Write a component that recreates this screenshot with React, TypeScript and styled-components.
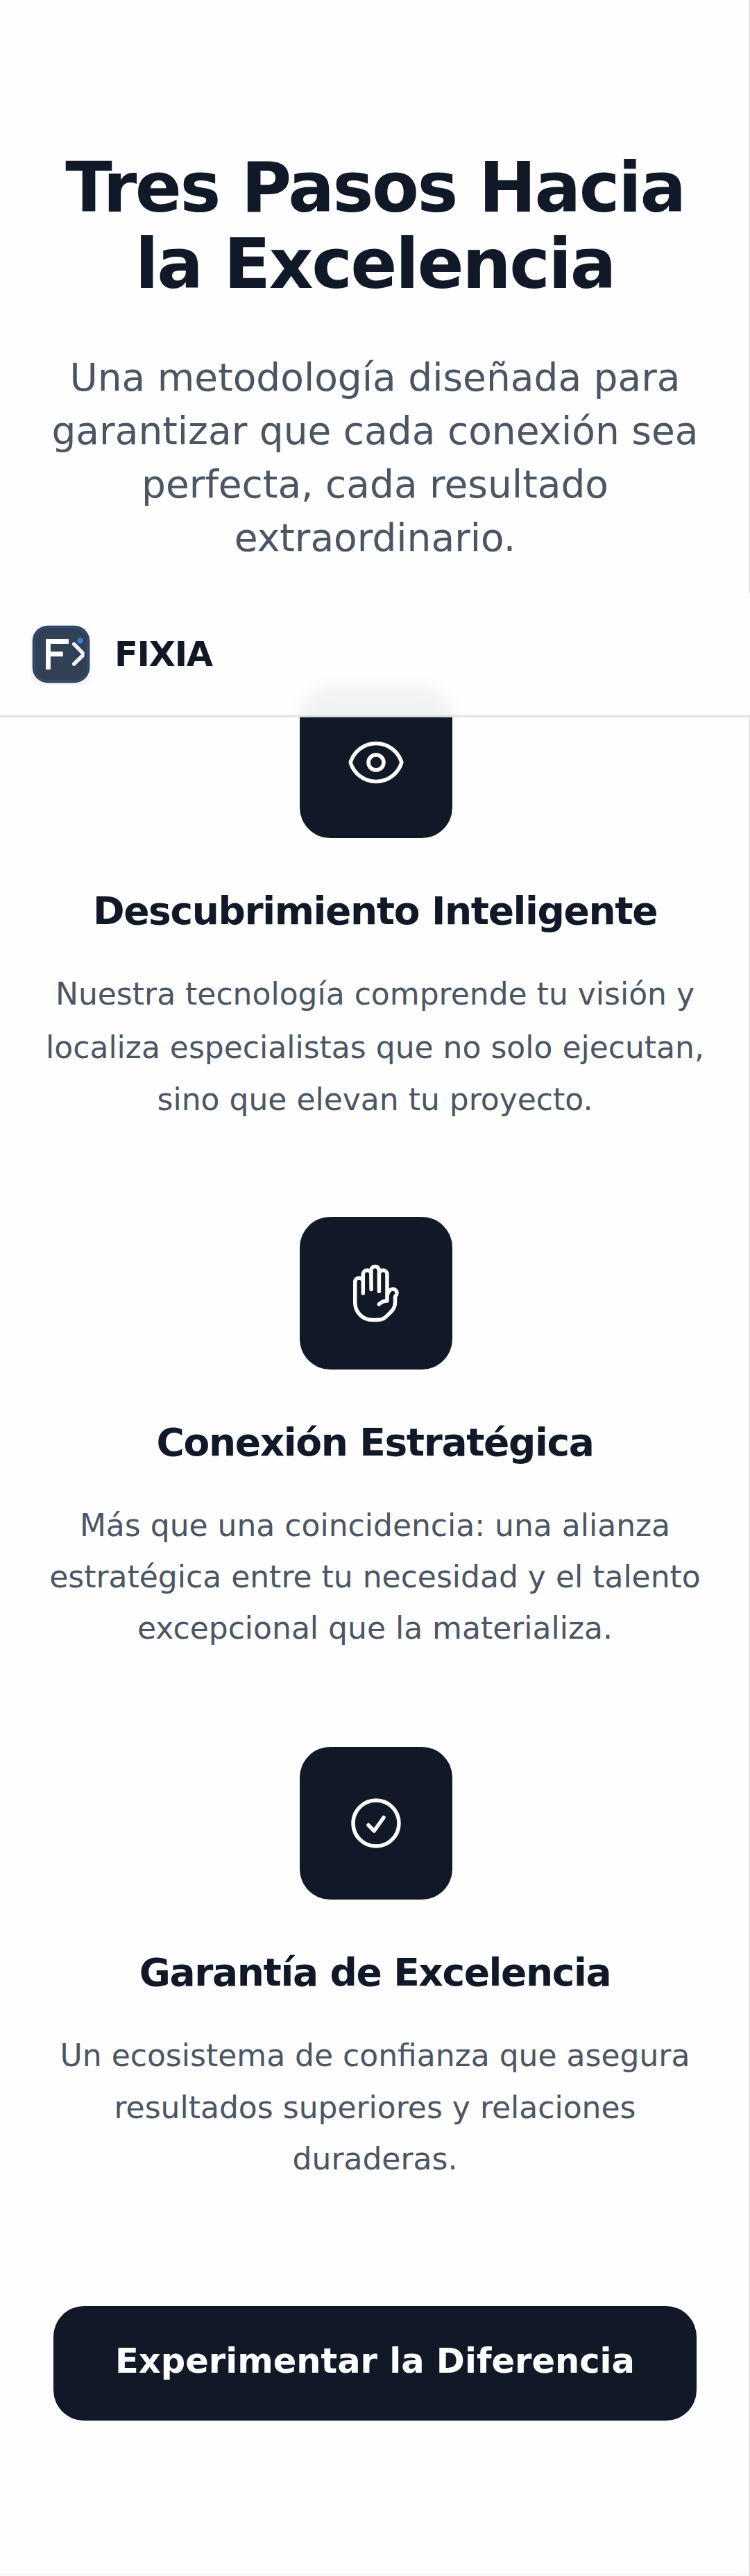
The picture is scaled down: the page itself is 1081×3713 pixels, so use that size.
import React from "react";
import styled, { createGlobalStyle } from "styled-components";
import { HiOutlineCheckCircle, HiOutlineEye, HiOutlineHandRaised } from "react-icons/hi2";
import type { IconType } from "react-icons";

const ink = "#111827";
const muted = "#4b5563";

const GlobalStyle = createGlobalStyle`
  *, *::before, *::after { box-sizing: border-box; }
  body {
    margin: 0;
    background: #fafafa;
    color: ${ink};
    font-family: "DejaVu Sans", sans-serif;
  }
  h2, h3, p { margin: 0; }
`;

const Page = styled.main`
  position: relative;
  width: 1081px;
  height: 3713px;
  overflow: hidden;
`;

const Content = styled.div`
  height: 100%;
  border-right: 1px solid #d5e4e0;
`;

const Section = styled.section`
  display: flex;
  flex-direction: column;
  align-items: center;
  height: 3709px;
  padding: 216px 0 0 1px;
  background: #fefefe;
  text-align: center;
`;

const Line = styled.span<{ $after?: number }>`
  display: block;
  margin-bottom: ${({ $after = 0 }) => $after}px;
  white-space: nowrap;
`;

const Heading = styled.h2`
  font-size: 99px;
  line-height: 110px;
  font-weight: 700;
  letter-spacing: -0.025em;
`;

const Lead = styled.p`
  margin-top: 70px;
  color: ${muted};
  font-size: 55px;
  line-height: 77px;
`;

const Steps = styled.div`
  display: flex;
  flex-direction: column;
  gap: 132px;
  margin-top: 175.25px;
`;

const Step = styled.article`
  display: flex;
  flex-direction: column;
  align-items: center;
  height: 632.5px;
`;

const Tile = styled.div`
  display: flex;
  align-items: center;
  justify-content: center;
  width: 220px;
  height: 220px;
  margin-left: 2px;
  border-radius: 44px;
  background: ${ink};
  color: #fff;
`;

const StepTitle = styled.h3`
  margin-top: 67px;
  font-size: 55px;
  line-height: 77px;
  font-weight: 700;
  letter-spacing: -0.025em;
`;

const StepText = styled.p`
  margin-top: 44px;
  color: ${muted};
  font-size: 44px;
  line-height: 74.25px;
`;

const Action = styled.button`
  width: 927px;
  height: 165px;
  margin-top: 173.25px;
  padding: 0 0 7px;
  border: 0;
  border-radius: 44px;
  background: ${ink};
  color: #fff;
  font: 700 49.5px/77px "DejaVu Sans", sans-serif;
`;

const Header = styled.header`
  position: absolute;
  top: 855px;
  left: 0;
  display: flex;
  align-items: center;
  gap: 33px;
  width: 1081px;
  height: 179px;
  padding-left: 44px;
  border-bottom: 3px solid rgba(0, 0, 0, 0.1);
  background: rgba(254, 254, 254, 0.95);
  backdrop-filter: blur(11px);
`;

const Brand = styled.span`
  font-size: 49.5px;
  line-height: 77px;
  font-weight: 700;
  letter-spacing: -0.025em;
`;

const LogoMark = styled.svg`
  display: block;
  width: 88px;
  height: 88px;
`;

function Logo() {
  return (
    <LogoMark viewBox="0 0 64 64" fill="none">
      <defs>
        <filter id="soft" x="-10%" y="-10%" width="120%" height="120%">
          <feDropShadow dx="0" dy="2" stdDeviation="3" floodColor="#1e293b" floodOpacity="0.1" />
        </filter>
      </defs>
      <rect x="2" y="2" width="60" height="60" rx="16" fill="#334155" filter="url(#soft)" />
      <rect x="4" y="4" width="56" height="56" rx="14" stroke="#3066be" strokeOpacity="0.5" />
      <path d="M16 16h24v5H21v8.2h13v5.2H21V48h-5z" fill="#fff" />
      <path
        d="M45.6 21.4l9 9.2M54.6 33.4l-9 8.8"
        stroke="#f3f4f6"
        strokeWidth="4"
        strokeLinecap="round"
      />
      <circle cx="52" cy="17.8" r="3.1" fill="#3b7ddd" />
    </LogoMark>
  );
}

interface StepData {
  icon: IconType;
  title: string;
  lines: string[];
  firstLineGap?: number;
}

const steps: StepData[] = [
  {
    icon: HiOutlineEye,
    title: "Descubrimiento Inteligente",
    lines: [
      "Nuestra tecnología comprende tu visión y",
      "localiza especialistas que no solo ejecutan,",
      "sino que elevan tu proyecto.",
    ],
    firstLineGap: 2.75,
  },
  {
    icon: HiOutlineHandRaised,
    title: "Conexión Estratégica",
    lines: [
      "Más que una coincidencia: una alianza",
      "estratégica entre tu necesidad y el talento",
      "excepcional que la materializa.",
    ],
  },
  {
    icon: HiOutlineCheckCircle,
    title: "Garantía de Excelencia",
    lines: [
      "Un ecosistema de confianza que asegura",
      "resultados superiores y relaciones",
      "duraderas.",
    ],
  },
];

const leadLines = [
  "Una metodología diseñada para",
  "garantizar que cada conexión sea",
  "perfecta, cada resultado",
  "extraordinario.",
];

export default function App() {
  return (
    <Page>
      <GlobalStyle />
      <Content>
        <Section>
          <Heading>
            <Line>Tres Pasos Hacia</Line>
            <Line>la Excelencia</Line>
          </Heading>
          <Lead>
            {leadLines.map((line) => (
              <Line key={line}>{line}</Line>
            ))}
          </Lead>
          <Steps>
            {steps.map(({ icon: Icon, title, lines, firstLineGap }) => (
              <Step key={title}>
                <Tile>
                  <Icon size={88} />
                </Tile>
                <StepTitle>{title}</StepTitle>
                <StepText>
                  {lines.map((line, index) => (
                    <Line key={line} $after={index === 0 ? firstLineGap : 0}>
                      {line}
                    </Line>
                  ))}
                </StepText>
              </Step>
            ))}
          </Steps>
          <Action>Experimentar la Diferencia</Action>
        </Section>
      </Content>
      <Header>
        <Logo />
        <Brand>FIXIA</Brand>
      </Header>
    </Page>
  );
}
